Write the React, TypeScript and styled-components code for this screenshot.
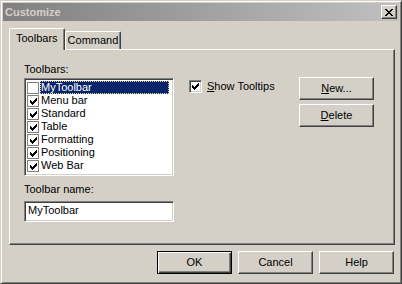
import React from "react";
import styled, { createGlobalStyle } from "styled-components";

const face = "#d4d0c8";
const shadow = "#808080";
const dark = "#404040";

const GlobalStyle = createGlobalStyle`
  html, body {
    margin: 0;
    padding: 0;
    background: ${face};
  }
  body {
    font-family: "Liberation Sans", Arial, sans-serif;
    font-size: 11px;
    color: #000;
  }
`;

const Window = styled.div`
  box-sizing: border-box;
  width: 402px;
  height: 284px;
  background: ${face};
  border: 1px solid;
  border-color: ${face} ${dark} ${dark} ${face};
  box-shadow: inset 1px 1px #fff, inset -1px -1px ${shadow};
  padding: 2px 2px 0 2px;
  display: flex;
  flex-direction: column;
`;

const TitleBar = styled.div`
  height: 18px;
  display: flex;
  align-items: center;
  justify-content: space-between;
  padding: 0 2px;
  background: linear-gradient(to right, #808080, #c0c0c0);
`;

const Title = styled.span`
  font-weight: bold;
  color: ${face};
  font-size: 11px;
  line-height: 18px;
`;

const CloseButton = styled.div`
  box-sizing: border-box;
  width: 16px;
  height: 14px;
  background: ${face};
  border: 1px solid;
  border-color: #fff ${dark} ${dark} #fff;
  box-shadow: inset -1px -1px ${shadow};
  display: flex;
  align-items: center;
  justify-content: center;
`;

const Body = styled.div`
  padding: 7px 4px 0 6px;
  display: flex;
  flex-direction: column;
`;

const TabStrip = styled.div`
  display: flex;
  align-items: flex-end;
  height: 21px;
`;

const Tab = styled.div<{ $active?: boolean }>`
  box-sizing: border-box;
  height: ${(p) => (p.$active ? 22 : 18)}px;
  margin-bottom: ${(p) => (p.$active ? -1 : 0)}px;
  position: relative;
  z-index: ${(p) => (p.$active ? 1 : 0)};
  background: ${face};
  border: 1px solid;
  border-bottom: none;
  border-color: #fff ${dark} transparent #fff;
  border-radius: 2px 2px 0 0;
  box-shadow: inset -1px 0 ${shadow};
  padding: 0 ${(p) => (p.$active ? 6 : 2)}px;
  line-height: ${(p) => (p.$active ? 19 : 17)}px;
`;

const Panel = styled.div`
  box-sizing: border-box;
  height: 196px;
  border: 1px solid;
  border-color: #fff ${dark} ${dark} #fff;
  box-shadow: inset -1px -1px ${shadow};
  padding: 13px 20px 0 14px;
  display: flex;
`;

const LeftCol = styled.div`
  width: 150px;
  display: flex;
  flex-direction: column;
`;

const Label = styled.div<{ $gap?: number }>`
  line-height: 13px;
  height: 13px;
  margin-bottom: ${(p) => p.$gap ?? 2}px;
`;

const Sunken = styled.div<{ $h: number }>`
  box-sizing: border-box;
  width: 150px;
  height: ${(p) => p.$h}px;
  background: #fff;
  border: 1px solid;
  border-color: ${shadow} #fff #fff ${shadow};
  box-shadow: inset 1px 1px ${dark}, inset -1px -1px ${face};
`;

const List = styled(Sunken)`
  padding: 2px;
  margin-bottom: 7px;
`;

const Row = styled.div`
  display: flex;
  align-items: center;
  height: 13px;
`;

const FlatBox = styled.div`
  box-sizing: border-box;
  width: 12px;
  height: 12px;
  margin: 1px 1px 0 0;
  border: 1px solid ${shadow};
  background: #fff;
  display: flex;
  align-items: center;
  justify-content: center;
`;

const ItemText = styled.span<{ $selected?: boolean }>`
  flex: 1;
  height: 13px;
  line-height: 13px;
  padding-left: 1px;
  margin-right: 2px;
  box-sizing: border-box;
  background: ${(p) => (p.$selected ? "#0a246a" : "transparent")};
  color: ${(p) => (p.$selected ? "#fff" : "#000")};
  outline: ${(p) => (p.$selected ? "1px dotted #e8d890" : "none")};
  outline-offset: -1px;
`;

const Input = styled(Sunken)`
  padding: 0 3px;
  line-height: 17px;
`;

const Options = styled.div`
  margin-left: 15px;
  padding-top: 17px;
`;

const CheckRow = styled.label`
  display: flex;
  align-items: center;
  gap: 5px;
  line-height: 13px;
`;

const SunkenBox = styled.div`
  box-sizing: border-box;
  width: 13px;
  height: 13px;
  background: #fff;
  border: 1px solid;
  border-color: ${shadow} #fff #fff ${shadow};
  box-shadow: inset 1px 1px ${dark}, inset -1px -1px ${face};
  display: flex;
  align-items: center;
  justify-content: center;
`;

const SideButtons = styled.div`
  margin-left: auto;
  padding-top: 14px;
  display: flex;
  flex-direction: column;
  gap: 4px;
`;

const Button = styled.div<{ $default?: boolean }>`
  box-sizing: border-box;
  width: 75px;
  height: 23px;
  background: ${face};
  border: 1px solid;
  border-color: ${(p) =>
    p.$default ? "#000" : `#fff ${dark} ${dark} #fff`};
  box-shadow: ${(p) =>
    p.$default
      ? `inset 1px 1px #fff, inset -1px -1px ${dark}, inset -2px -2px ${shadow}`
      : `inset -1px -1px ${shadow}`};
  display: flex;
  align-items: center;
  justify-content: center;
  line-height: 13px;
`;

const Footer = styled.div`
  display: flex;
  justify-content: flex-end;
  gap: 6px;
  margin-top: 6px;
  padding-right: 1px;
`;

const checkPixels = [
  "......#",
  ".....##",
  "#...###",
  "##.###.",
  "#####..",
  ".###...",
  "..#....",
];

const closePixels = [
  "##....##",
  ".##..##.",
  "..####..",
  "...##...",
  "..####..",
  ".##..##.",
  "##....##",
];

const PixelIcon = ({ rows }: { rows: string[] }) => {
  let d = "";
  rows.forEach((row, y) => {
    row.split("").forEach((c, x) => {
      if (c === "#") d += `M${x} ${y}h1v1h-1z`;
    });
  });
  return (
    <svg
      width={rows[0].length}
      height={rows.length}
      viewBox={`0 0 ${rows[0].length} ${rows.length}`}
      shapeRendering="crispEdges"
    >
      <path d={d} fill="#000" />
    </svg>
  );
};

const toolbars = [
  { name: "MyToolbar", on: false },
  { name: "Menu bar", on: true },
  { name: "Standard", on: true },
  { name: "Table", on: true },
  { name: "Formatting", on: true },
  { name: "Positioning", on: true },
  { name: "Web Bar", on: true },
];

const App = () => {
  return (
    <>
      <GlobalStyle />
      <Window>
        <TitleBar>
          <Title>Customize</Title>
          <CloseButton>
            <PixelIcon rows={closePixels} />
          </CloseButton>
        </TitleBar>
        <Body>
          <TabStrip>
            <Tab $active>Toolbars</Tab>
            <Tab>Command</Tab>
          </TabStrip>
          <Panel>
            <LeftCol>
              <Label>Toolbars:</Label>
              <List $h={98}>
                {toolbars.map((t, i) => (
                  <Row key={t.name}>
                    <FlatBox>{t.on && <PixelIcon rows={checkPixels} />}</FlatBox>
                    <ItemText $selected={i === 0}>{t.name}</ItemText>
                  </Row>
                ))}
              </List>
              <Label $gap={5}>Toolbar name:</Label>
              <Input $h={21}>MyToolbar</Input>
            </LeftCol>
            <Options>
              <CheckRow>
                <SunkenBox>
                  <PixelIcon rows={checkPixels} />
                </SunkenBox>
                <span>
                  <u>S</u>how Tooltips
                </span>
              </CheckRow>
            </Options>
            <SideButtons>
              <Button>
                <span>
                  <u>N</u>ew...
                </span>
              </Button>
              <Button>
                <span>
                  <u>D</u>elete
                </span>
              </Button>
            </SideButtons>
          </Panel>
          <Footer>
            <Button $default>OK</Button>
            <Button>Cancel</Button>
            <Button>Help</Button>
          </Footer>
        </Body>
      </Window>
    </>
  );
};

export default App;
